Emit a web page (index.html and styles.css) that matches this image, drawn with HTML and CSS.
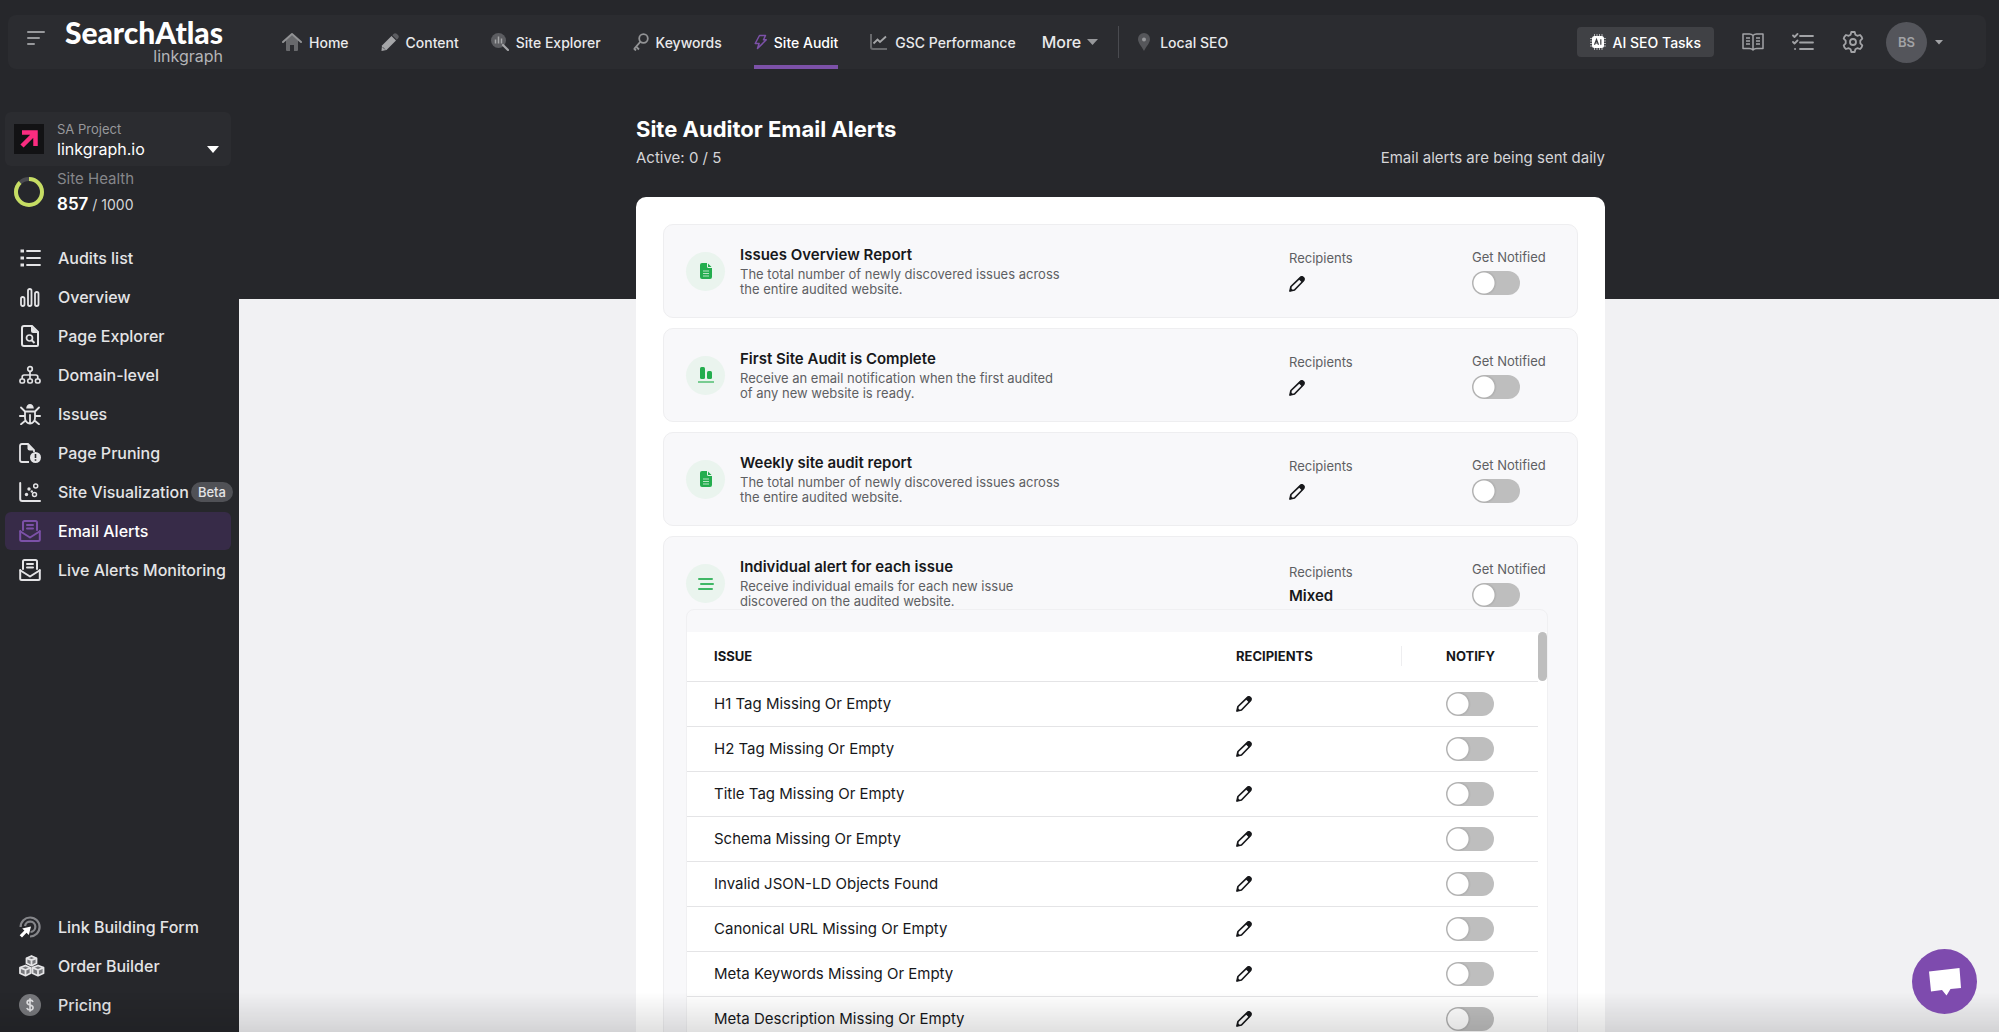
FILE: index.html
```
<!DOCTYPE html>
<html lang="en">
<head>
    <meta charset="UTF-8">
    <meta name="viewport" content="width=device-width, initial-scale=1.0">
    <title>Site Auditor Email Alerts</title>
    <link rel="stylesheet" href="styles.css">
</head>
<body>
    <!-- shared icons -->
    <svg class="sprite" aria-hidden="true">
        <symbol id="i-edit" viewBox="0 0 16 16">
            <path d="M1 15l1-4.500L11 1.800a2 2 0 0 1 3.200 3.200L5.500 14z" fill="none" stroke="currentColor" stroke-width="1.700" stroke-linejoin="round"/>
            <path d="M9.500 3l2-1.900a2.200 2.200 0 0 1 3.400 3.400l-1.900 2z" fill="currentColor"/>
            <path d="M.6 15.400l.9-3.600 2.700 2.700z" fill="currentColor"/>
        </symbol>
        <symbol id="i-doc" viewBox="0 0 16 16">
            <path d="M2 2a2 2 0 0 1 2-2h5v3.500A1.500 1.500 0 0 0 10.500 5H14v9a2 2 0 0 1-2 2H4a2 2 0 0 1-2-2z" fill="#24ad4e"/>
            <path d="M10 .5V4h3.500z" fill="#24ad4e"/>
            <path d="M5 8h6M5 10.500h6M5 13h6" stroke="#b5e4c2" stroke-width="1.100"/>
        </symbol>
        <symbol id="i-mail" viewBox="0 0 22 22">
            <g fill="none" stroke="currentColor" stroke-width="2" stroke-linejoin="round" stroke-linecap="round">
                <path d="M4 10V2.500Q4 1 5.500 1h11Q18 1 18 2.500V10"/>
                <path d="M8 5h6M8 8.500h6"/>
                <path d="M1.200 11V19.500Q1.200 21 2.700 21h16.600q1.500 0 1.500-1.500V11"/>
                <path d="M1.500 11.500L11 17.500l9.500-6"/>
            </g>
        </symbol>
    </svg>

    <header class="topbar">
        <button class="icon-btn menu-btn" aria-label="Toggle menu">
            <svg width="18" height="16" viewBox="0 0 18 16"><path d="M1 2h16M1 8h11M1 14h6" stroke="#97989b" stroke-width="2" stroke-linecap="round"/></svg>
        </button>
        <a class="logo" href="#">
            <span class="logo-name">SearchAtlas</span>
            <span class="logo-sub">linkgraph</span>
        </a>
        <nav class="main-nav">
            <a href="#">
                <svg width="20" height="20" viewBox="0 0 20 20"><path d="M4 8l6-5 6 5v10q0 1-1 1h-3v-6H8v6H5q-1 0-1-1z" fill="#68696c"/><path d="M1 10l9-8 9 8" fill="none" stroke="#929395" stroke-width="2" stroke-linecap="round" stroke-linejoin="round"/></svg>
                Home
            </a>
            <a href="#">
                <svg width="18" height="18" viewBox="0 0 18 18"><path d="M1 12.500L10.500 3l4.500 4.500L5.500 17 .5 18z" fill="#a5a6a8"/><path d="M11.300 2.200l1.200-1.200q1.500-1.500 3.200-.2l1.500 1.500q1.300 1.700-.2 3.200l-1.200 1.200z" fill="#5c5d61"/><path d="M1.500 14l2.500 2.500" stroke="#55565a"/></svg>
                Content
            </a>
            <a href="#">
                <svg width="18" height="18" viewBox="0 0 18 18"><circle cx="7.500" cy="7.500" r="7.500" fill="#5c5d61"/><path d="M4.500 6.500v4M7.500 3.500v7M10.500 5.500v5" stroke="#a5a6a8" stroke-width="1.500"/><path d="M12 12l5 5" stroke="#a5a6a8" stroke-width="2.200" stroke-linecap="round"/></svg>
                Site Explorer
            </a>
            <a href="#">
                <svg width="16" height="18" viewBox="0 0 16 18"><g fill="none" stroke="#929395" stroke-width="1.800"><circle cx="10.500" cy="5.500" r="4.300"/><path d="M7.500 8.700L1 16M3 13.500l3 3M1 15.500l2 2" /></g></svg>
                Keywords
            </a>
            <a class="active" href="#">
                <svg width="13" height="16" viewBox="0 0 13 16"><path d="M5.500 1.500h6L9.500 5.800h2.800L3.500 14.500l1.600-5H1.200z" fill="none" stroke="#7c51a8" stroke-width="1.500" stroke-linejoin="round"/></svg>
                Site Audit
            </a>
            <a href="#">
                <svg width="18" height="16" viewBox="0 0 18 16"><path d="M1 0v13q0 2 2 2h14" fill="none" stroke="#68696c" stroke-width="2"/><path d="M3.500 9.500l4-4 2.500 2.500 6-5.500" fill="none" stroke="#a5a6a8" stroke-width="1.800"/></svg>
                GSC Performance
            </a>
            <button class="more-btn">
                More
                <svg width="11" height="7" viewBox="0 0 11 7"><path d="M0 0h11L5.500 6z" fill="#97989b"/></svg>
            </button>
            <span class="nav-divider"></span>
            <a class="local" href="#">
                <svg width="14" height="18" viewBox="0 0 14 18"><path d="M7 0a6 6 0 0 1 6 6c0 4-3.500 7-6 12C4.500 13 1 10 1 6a6 6 0 0 1 6-6z" fill="#55565a"/><circle cx="7" cy="6.500" r="2" fill="#97989b"/></svg>
                Local SEO
            </a>
        </nav>
        <div class="tools">
            <button class="ai-btn">
                <svg width="16" height="16" viewBox="0 0 16 16"><path d="M4.500 0v16M7 0v16M9.500 0v16M12 0v16M0 4.500h16M0 7h16M0 9.500h16M0 12h16" stroke="#bcbdbf" stroke-width=".9"/><rect x="2" y="2" width="12" height="12" rx="2.500" fill="#fff"/><path d="M4.500 10.700L6.500 5.500l2 5.200M5.200 9h2.600M10.800 5.300v5.400" fill="none" stroke="#3d3e42" stroke-width="1.200"/></svg>
                AI SEO Tasks
            </button>
            <button class="icon-btn" aria-label="Guides">
                <svg width="22" height="18" viewBox="0 0 22 18"><g fill="none" stroke="#a2a3a6" stroke-width="1.500" stroke-linejoin="round"><path d="M11 2.500Q9.500 1 7.500 1H1v14.500h6.500q2 0 3.500 1.500 1.500-1.500 3.500-1.500H21V1h-6.500Q12.500 1 11 2.500V17"/><path d="M4 5h4M4 8h4M4 11h4M14 5h4M14 8h4M14 11h4"/></g></svg>
            </button>
            <button class="icon-btn" aria-label="Tasks">
                <svg width="22" height="18" viewBox="0 0 22 18"><g fill="none" stroke="#a2a3a6" stroke-width="1.800" stroke-linecap="round" stroke-linejoin="round"><path d="M8 3h13M8 9.500h13M8 16h13M1 2.500L2.500 4 5.500 1M1 9l1.500 1.500 3-3M3 16h.1"/></g></svg>
            </button>
            <button class="icon-btn" aria-label="Settings">
                <svg width="22" height="22" viewBox="0 0 22 22"><g fill="none" stroke="#a2a3a6" stroke-width="1.800" stroke-linejoin="round"><path d="M9.300 1h3.400l.7 2.700 1.900 1.100L18 4q2 1.600 2.300 3.700L18.300 9.700v2.600l2 2Q20 16.400 18 18l-2.700-.8-1.900 1.100-.7 2.700H9.300l-.7-2.700-1.900-1.100L4 18q-2-1.600-2.300-3.700l2-2V9.700l-2-2Q2 5.600 4 4l2.700.8 1.900-1.100z"/><circle cx="11" cy="11" r="3"/></g></svg>
            </button>
            <button class="user-btn">
                <span class="avatar">BS</span>
                <svg width="8" height="5" viewBox="0 0 8 5"><path d="M0 0h8L4 4.500z" fill="#a2a3a6"/></svg>
            </button>
        </div>
    </header>

    <div class="layout">
        <aside class="sidebar">
            <div>
                <button class="project">
                    <svg width="30" height="30" viewBox="0 0 30 30"><path d="M0 0h30v30H0z" fill="#121214"/><path d="M8 22L22 8M8 8.500h13.500V22" fill="none" stroke="#fb2c80" stroke-width="4.500"/></svg>
                    <span class="project-text">
                        <small>SA Project</small>
                        <span>linkgraph.io</span>
                    </span>
                    <svg width="12" height="8" viewBox="0 0 12 8"><path d="M0 0h12L6 7z" fill="#fff"/></svg>
                </button>
                <div class="health">
                    <svg width="32" height="32" viewBox="0 0 32 32"><circle cx="16" cy="16" r="13" fill="none" stroke="#4a4b50" stroke-width="4"/><circle cx="16" cy="16" r="13" fill="none" stroke="#c6dd63" stroke-width="4" pathLength="1000" stroke-dasharray="880 1000" transform="rotate(-90 16 16)"/></svg>
                    <div>
                        <p class="health-label">Site Health</p>
                        <p class="health-score"><strong>857</strong> / 1000</p>
                    </div>
                </div>
                <nav class="side-nav">
                    <a href="#">
                        <svg width="22" height="22" viewBox="0 0 22 22"><path d="M1.500 2.500H5V5.500H1.500zM1.500 9.500H5v3H1.500zM1.500 16.500H5v3H1.500z" fill="currentColor"/><path d="M8 4h13M8 11h13M8 18h13" stroke="currentColor" stroke-width="1.800" stroke-linecap="round"/></svg>
                        Audits list
                    </a>
                    <a href="#">
                        <svg width="22" height="22" viewBox="0 0 22 22"><g fill="none" stroke="currentColor" stroke-width="1.800"><rect x="2" y="11" width="3.500" height="9" rx="1.700"/><rect x="9" y="3" width="3.500" height="17" rx="1.700"/><rect x="16" y="6" width="3.500" height="14" rx="1.700"/></g></svg>
                        Overview
                    </a>
                    <a href="#">
                        <svg width="22" height="22" viewBox="0 0 22 22"><path d="M5 1h8l6 6v13q0 1-1 1H5q-2 0-2-2V3q0-2 2-2z" fill="none" stroke="currentColor" stroke-width="2"/><path d="M12 1l7 7h-5q-2 0-2-2z" fill="currentColor"/><circle cx="10.500" cy="13" r="3" fill="none" stroke="currentColor" stroke-width="1.700"/><path d="M12.500 15l3 3" stroke="currentColor" stroke-width="1.900"/></svg>
                        Page Explorer
                    </a>
                    <a href="#">
                        <svg width="22" height="22" viewBox="0 0 22 22"><g fill="none" stroke="currentColor" stroke-width="1.700"><circle cx="11" cy="5" r="2.300"/><rect x="1" y="15" width="4.500" height="4" rx="1.500"/><rect x="8.800" y="15" width="4.500" height="4" rx="1.500"/><rect x="16.500" y="15" width="4.500" height="4" rx="1.500"/><path d="M11 7.500V15M3.200 15v-2q0-2 2-2h11.600q2 0 2 2v2"/></g></svg>
                        Domain-level
                    </a>
                    <a href="#">
                        <svg width="22" height="22" viewBox="0 0 22 22"><path d="M7.200 5.500a3.800 4.500 0 0 1 7.600 0z" fill="currentColor"/><g fill="none" stroke="currentColor" stroke-width="1.800" stroke-linecap="round"><path d="M6 8.500h10v6.500a5 5.500 0 0 1-10 0zM11 12v8M6 8.500L2 4.500M16 8.500l4-4M6 13H.9M16 13h5.100M6.500 17.500L2 21.200M15.500 17.500l4.500 3.700"/></g></svg>
                        Issues
                    </a>
                    <a href="#">
                        <svg width="22" height="22" viewBox="0 0 22 22"><path d="M10 20H3q-2 0-2-2V4q0-2 2-2h6l6 6v2" fill="none" stroke="currentColor" stroke-width="1.800"/><path d="M8.500 2L15 8.500h-4.500q-2 0-2-2z" fill="currentColor"/><circle cx="16.500" cy="15.500" r="5.500" fill="currentColor"/><path d="M16.500 12v4M16.500 17.300v1.500" stroke="#26272b" stroke-width="1.600"/></svg>
                        Page Pruning
                    </a>
                    <a href="#">
                        <svg width="22" height="22" viewBox="0 0 22 22"><path d="M1.200 2v16q0 2 2 2H21" fill="none" stroke="currentColor" stroke-width="2" stroke-linecap="round"/><g fill="currentColor"><circle cx="7.500" cy="13.500" r="1.700"/><circle cx="10" cy="8" r="1.700"/><circle cx="12.800" cy="10.500" r="1.200"/></g><g fill="none" stroke="currentColor" stroke-width="1.500"><circle cx="16.700" cy="5" r="2"/><circle cx="15.500" cy="13.500" r="2"/></g></svg>
                        Site Visualization
                        <span class="badge">Beta</span>
                    </a>
                    <a class="active" href="#">
                        <svg width="22" height="22"><use href="#i-mail"/></svg>
                        Email Alerts
                    </a>
                    <a href="#">
                        <svg width="22" height="22"><use href="#i-mail"/></svg>
                        Live Alerts Monitoring
                    </a>
                </nav>
            </div>
            <nav class="side-nav">
                <a href="#">
                    <svg width="22" height="22" viewBox="0 0 22 22"><g fill="none" stroke="#85868a" stroke-width="2.200"><path d="M1.600 11A9.500 9.500 0 1 1 11 20.500"/><path d="M6 10a5.200 5.200 0 1 1 5.500 6"/></g><path d="M12 10.500L9.800 19l-2.300-2.300L3 21.500.7 19.200l4.700-4.600-2.200-2.200z" fill="#fff"/></svg>
                    Link Building Form
                </a>
                <a href="#">
                    <svg class="wide" width="26" height="22" viewBox="0 0 26 22"><g fill="#77787c" stroke="#e4e4e6" stroke-width="1.800" stroke-linejoin="round"><path d="M12.500 1l5 2.200v5l-5 2.500-5-2.500v-5zM6.500 10.500l5 2.200v5.500l-5 2.500-5.500-2.500v-5.500zM19 10.500l5.500 2.200v5.500L19 20.700l-5.500-2.500v-5.500z"/><path d="M7.500 3.200l5 2 5-2M12.500 5.200v5.500M1 12.700l5.500 2.300 5-2.300M6.500 15v5.700M13.500 12.700L19 15l5.500-2.300M19 15v5.700" fill="none"/></g></svg>
                    Order Builder
                </a>
                <a href="#">
                    <svg width="22" height="22" viewBox="0 0 22 22"><circle cx="11" cy="11" r="11" fill="#77787c"/><path d="M14 8q-.7-1.900-3-1.900-2.900 0-2.900 2.300Q8.100 10.300 11 11q3.100.7 3.100 2.700 0 2.300-3.100 2.300-2.500 0-3.200-2M11 4.200v13.600" fill="none" stroke="#e4e4e6" stroke-width="1.600"/></svg>
                    Pricing
                </a>
            </nav>
        </aside>

        <main class="content">
            <h1>Site Auditor Email Alerts</h1>
            <div class="subtitle">
                <span>Active: 0 / 5</span>
                <span>Email alerts are being sent daily</span>
            </div>

            <div class="card">
                <section class="alert">
                    <div class="alert-head">
                        <span class="alert-icon"><svg width="16" height="16"><use href="#i-doc"/></svg></span>
                        <div class="alert-text">
                            <h2>Issues Overview Report</h2>
                            <p>The total number of newly discovered issues across<br>the entire audited website.</p>
                        </div>
                        <div class="recipients">
                            <span>Recipients</span>
                            <button class="icon-btn" aria-label="Edit recipients"><svg width="16" height="16"><use href="#i-edit"/></svg></button>
                        </div>
                        <label class="notified">Get Notified <input class="switch" type="checkbox"></label>
                    </div>
                </section>

                <section class="alert">
                    <div class="alert-head">
                        <span class="alert-icon"><svg width="16" height="16" viewBox="0 0 16 16"><rect x="2" width="5" height="12" rx="1.500" fill="#24ad4e"/><rect x="9" y="4" width="5" height="8" rx="1.500" fill="#24ad4e"/><path d="M0 15h16" stroke="#5cc27a" stroke-width="1.600"/></svg></span>
                        <div class="alert-text">
                            <h2>First Site Audit is Complete</h2>
                            <p>Receive an email notification when the first audited<br>of any new website is ready.</p>
                        </div>
                        <div class="recipients">
                            <span>Recipients</span>
                            <button class="icon-btn" aria-label="Edit recipients"><svg width="16" height="16"><use href="#i-edit"/></svg></button>
                        </div>
                        <label class="notified">Get Notified <input class="switch" type="checkbox"></label>
                    </div>
                </section>

                <section class="alert">
                    <div class="alert-head">
                        <span class="alert-icon"><svg width="16" height="16"><use href="#i-doc"/></svg></span>
                        <div class="alert-text">
                            <h2>Weekly site audit report</h2>
                            <p>The total number of newly discovered issues across<br>the entire audited website.</p>
                        </div>
                        <div class="recipients">
                            <span>Recipients</span>
                            <button class="icon-btn" aria-label="Edit recipients"><svg width="16" height="16"><use href="#i-edit"/></svg></button>
                        </div>
                        <label class="notified">Get Notified <input class="switch" type="checkbox"></label>
                    </div>
                </section>

                <section class="alert">
                    <div class="alert-head with-table">
                        <span class="alert-icon"><svg width="16" height="16" viewBox="0 0 16 16"><path d="M1 3h13M3 8h12M1 13h13" stroke="#3fb765" stroke-width="2" stroke-linecap="round"/></svg></span>
                        <div class="alert-text">
                            <h2>Individual alert for each issue</h2>
                            <p>Receive individual emails for each new issue<br>discovered on the audited website.</p>
                        </div>
                        <div class="recipients">
                            <span>Recipients</span>
                            <strong>Mixed</strong>
                        </div>
                        <label class="notified">Get Notified <input class="switch" type="checkbox"></label>
                    </div>
                    <div class="issues">
                        <table>
                            <thead>
                                <tr><th>Issue</th><th class="col-recipients"><span>Recipients</span></th><th class="col-notify">Notify</th></tr>
                            </thead>
                            <tbody>
                                <tr>
                                    <td>H1 Tag Missing Or Empty</td>
                                    <td><button class="icon-btn" aria-label="Edit recipients"><svg width="16" height="16"><use href="#i-edit"/></svg></button></td>
                                    <td><input class="switch" type="checkbox" aria-label="Notify"></td>
                                </tr>
                                <tr>
                                    <td>H2 Tag Missing Or Empty</td>
                                    <td><button class="icon-btn" aria-label="Edit recipients"><svg width="16" height="16"><use href="#i-edit"/></svg></button></td>
                                    <td><input class="switch" type="checkbox" aria-label="Notify"></td>
                                </tr>
                                <tr>
                                    <td>Title Tag Missing Or Empty</td>
                                    <td><button class="icon-btn" aria-label="Edit recipients"><svg width="16" height="16"><use href="#i-edit"/></svg></button></td>
                                    <td><input class="switch" type="checkbox" aria-label="Notify"></td>
                                </tr>
                                <tr>
                                    <td>Schema Missing Or Empty</td>
                                    <td><button class="icon-btn" aria-label="Edit recipients"><svg width="16" height="16"><use href="#i-edit"/></svg></button></td>
                                    <td><input class="switch" type="checkbox" aria-label="Notify"></td>
                                </tr>
                                <tr>
                                    <td>Invalid JSON-LD Objects Found</td>
                                    <td><button class="icon-btn" aria-label="Edit recipients"><svg width="16" height="16"><use href="#i-edit"/></svg></button></td>
                                    <td><input class="switch" type="checkbox" aria-label="Notify"></td>
                                </tr>
                                <tr>
                                    <td>Canonical URL Missing Or Empty</td>
                                    <td><button class="icon-btn" aria-label="Edit recipients"><svg width="16" height="16"><use href="#i-edit"/></svg></button></td>
                                    <td><input class="switch" type="checkbox" aria-label="Notify"></td>
                                </tr>
                                <tr>
                                    <td>Meta Keywords Missing Or Empty</td>
                                    <td><button class="icon-btn" aria-label="Edit recipients"><svg width="16" height="16"><use href="#i-edit"/></svg></button></td>
                                    <td><input class="switch" type="checkbox" aria-label="Notify"></td>
                                </tr>
                                <tr>
                                    <td>Meta Description Missing Or Empty</td>
                                    <td><button class="icon-btn" aria-label="Edit recipients"><svg width="16" height="16"><use href="#i-edit"/></svg></button></td>
                                    <td><input class="switch" type="checkbox" aria-label="Notify"></td>
                                </tr>
                            </tbody>
                        </table>
                        <div class="scroll-track"><div class="scroll-thumb"></div></div>
                    </div>
                </section>
            </div>
        </main>
    </div>

    <div class="bottom-fade"></div>
    <button class="chat" aria-label="Open chat">
        <svg width="34" height="30" viewBox="0 0 34 30"><path d="M1 4.500L31.500 1 33 21l-10.500 1L18.500 28.500 14 23 3 24.500z" fill="#fff"/></svg>
    </button>
</body>
</html>
```

FILE: styles.css
```
* {
    box-sizing: border-box;
}
body {
    margin: 0;
    height: 100vh;
    overflow: hidden;
    display: flex;
    flex-direction: column;
    font-family: Inter, "Liberation Sans", sans-serif;
    background: linear-gradient(#26272b 299px, #f1f1f3 299px);
    color: #17181b;
}
h1, h2, p {
    margin: 0;
}
a {
    color: inherit;
    text-decoration: none;
}
button {
    font-family: inherit;
    color: inherit;
    background: none;
    border: none;
    padding: 0;
    cursor: pointer;
}
svg {
    flex: none;
    display: block;
}
.sprite {
    width: 0;
    height: 0;
    position: absolute;
}

/* top bar */
.topbar {
    flex: none;
    display: flex;
    align-items: center;
    height: 54px;
    margin: 15px 13px 0 8px;
    padding: 0 43px 0 19px;
    background: #2b2c30;
    border-radius: 8px;
}
.menu-btn {
    padding-bottom: 8px;
}
.logo {
    width: 160px;
    margin-left: 18px;
    display: flex;
    flex-direction: column;
    align-items: flex-end;
}
.logo-name {
    font-family: Lato, sans-serif;
    font-weight: 900;
    font-size: 30px;
    line-height: 28px;
    color: #fff;
}
.logo-sub {
    font-size: 16px;
    line-height: 20px;
    color: #b4b5b8;
}
.main-nav {
    display: flex;
    align-items: center;
    align-self: stretch;
    gap: 32px;
    margin-left: 59px;
    font-size: 14px;
    font-weight: 500;
    color: #e9e9eb;
}
.main-nav a {
    display: flex;
    align-items: center;
    align-self: stretch;
    gap: 7px;
    white-space: nowrap;
}
.main-nav .active {
    color: #fff;
    background: linear-gradient(#7c51a8, #7c51a8) bottom / 100% 4px no-repeat;
}
.more-btn {
    display: flex;
    align-items: center;
    gap: 6px;
    margin-left: -6px;
    font-size: 16px;
    font-weight: 500;
}
.nav-divider {
    width: 1px;
    height: 32px;
    margin-left: -12px;
    background: #4a4b50;
}
.main-nav .local {
    margin-left: -14px;
    gap: 9px;
}
.tools {
    display: flex;
    align-items: center;
    gap: 28px;
    margin-left: auto;
}
.ai-btn {
    display: flex;
    align-items: center;
    gap: 7px;
    height: 30px;
    padding: 0 13px;
    border-radius: 4px;
    background: #404145;
    color: #fff;
    font-size: 14px;
    font-weight: 500;
}
.user-btn {
    display: flex;
    align-items: center;
    gap: 8px;
    margin-left: -6px;
}
.avatar {
    width: 41px;
    height: 41px;
    border-radius: 50%;
    background: #54555b;
    color: #a2a3a6;
    font-size: 13px;
    font-weight: 600;
    line-height: 41px;
}

.layout {
    flex: 1;
    min-height: 0;
    display: grid;
    grid-template-columns: 239px 1fr;
    grid-template-rows: minmax(0, 1fr);
    column-gap: 3px;
}

/* sidebar */
.sidebar {
    display: flex;
    flex-direction: column;
    justify-content: space-between;
    padding: 43px 8px 8px 5px;
    background: #26272b;
}
.project {
    display: flex;
    align-items: center;
    width: 100%;
    height: 54px;
    padding: 0 12px 0 9px;
    border-radius: 6px;
    background: #2b2c30;
    text-align: left;
}
.project-text {
    flex: 1;
    display: flex;
    flex-direction: column;
    padding-left: 13px;
    color: #fff;
    font-size: 16px;
    line-height: 20px;
}
.project-text small {
    font-size: 13px;
    color: #97989b;
}
.project > svg:last-child {
    align-self: flex-end;
    margin-bottom: 12px;
}
.health {
    display: flex;
    align-items: center;
    gap: 12px;
    padding: 0 8px;
    margin-bottom: 22px;
}
.health-label {
    font-size: 15px;
    line-height: 26px;
    color: #85868a;
}
.health-score {
    font-size: 14px;
    line-height: 25px;
    color: #d5d5d8;
}
.health-score strong {
    font-size: 17px;
    font-weight: 600;
    color: #fff;
}
.side-nav {
    display: flex;
    flex-direction: column;
    gap: 1px;
}
.side-nav a {
    display: flex;
    align-items: center;
    height: 38px;
    padding-left: 14px;
    border-radius: 6px;
    color: #e4e4e6;
    font-size: 16px;
    font-weight: 500;
    white-space: nowrap;
}
.side-nav svg {
    margin-right: 17px;
}
.side-nav .wide {
    margin-right: 13px;
}
.side-nav .active {
    background: #372b48;
    color: #fff;
}
.side-nav .active svg {
    color: #7c51a8;
}
.badge {
    margin-left: 2px;
    padding: 0 7px;
    border-radius: 10px;
    background: #505156;
    font-size: 13px;
    line-height: 20px;
}

/* content */
.content {
    width: 100%;
    max-width: 969px;
    margin: 0 auto;
    padding-top: 43px;
}
h1 {
    font-size: 22px;
    line-height: 34px;
    font-weight: 700;
    color: #fff;
}
.subtitle {
    display: flex;
    justify-content: space-between;
    margin-bottom: 27px;
    font-size: 15px;
    line-height: 24px;
    color: #d5d5d8;
}
.card {
    display: flex;
    flex-direction: column;
    gap: 10px;
    padding: 27px;
    border-radius: 10px;
    background: #fff;
}
.alert {
    border: 1px solid #eeeef0;
    border-radius: 10px;
    background: #f8f8fa;
}
.alert-head {
    display: grid;
    grid-template-columns: 54px 1fr 183px 75px;
    align-items: center;
    height: 92px;
    padding: 0 30px 0 22px;
}
.alert-head.with-table {
    height: 72px;
    padding-top: 18px;
}
.alert-icon {
    display: grid;
    place-items: center;
    width: 39px;
    height: 39px;
    border-radius: 50%;
    background: #eaf4ee;
}
.alert-text {
    padding-bottom: 3px;
}
.alert-text h2 {
    font-size: 15px;
    font-weight: 600;
    line-height: 24px;
}
.alert-text p {
    font-size: 13px;
    line-height: 15px;
    color: #5e5f63;
}
.recipients, .notified {
    font-size: 13px;
    line-height: 18px;
    color: #5e5f63;
    white-space: nowrap;
}
.recipients .icon-btn {
    margin: 9px 0 2px;
}
.recipients strong {
    display: block;
    margin-top: 6px;
    font-size: 15px;
    font-weight: 600;
    color: #17181b;
}
.icon-btn {
    display: block;
}
.recipients .icon-btn, td .icon-btn {
    color: #17181b;
}
.switch {
    appearance: none;
    display: block;
    width: 48px;
    height: 24px;
    margin: 0;
    border-radius: 12px;
    background: radial-gradient(circle at 12px 12px, #fff 10px, #b0b0b0 11px, #bebebe 13px);
    cursor: pointer;
}
.switch:checked {
    background: radial-gradient(circle at 36px 12px, #fff 10px, #7c51a8 11px);
}
.notified .switch {
    margin-top: 5px;
}

/* issue table */
.issues {
    display: flex;
    margin: 0 29px 0 22px;
    padding-top: 22px;
    border: 1px solid #f0f0f2;
    border-radius: 8px;
}
table {
    flex: 1;
    border-collapse: collapse;
    background: #fff;
}
th, td {
    padding: 0 0 0 27px;
    text-align: left;
    border-bottom: 1px solid #e4e4e6;
}
th {
    height: 49px;
    font-size: 13px;
    font-weight: 700;
    text-transform: uppercase;
}
td {
    height: 45px;
    font-size: 15px;
}
th + th, td + td {
    padding-left: 0;
}
.col-recipients {
    width: 210px;
}
.col-recipients span {
    display: block;
    width: 166px;
    line-height: 20px;
    border-right: 1px solid #eeeef0;
}
.col-notify {
    width: 92px;
}
.scroll-track {
    width: 9px;
    background: #fff;
}
.scroll-thumb {
    height: 49px;
    border-radius: 5px;
    background: #bebebe;
}

.bottom-fade {
    position: fixed;
    left: 0;
    right: 0;
    bottom: 0;
    height: 40px;
    background: linear-gradient(transparent, rgba(0, 0, 0, 0.12));
    pointer-events: none;
}
.chat {
    position: fixed;
    right: 22px;
    bottom: 18px;
    display: grid;
    place-items: center;
    width: 65px;
    height: 65px;
    border-radius: 50%;
    background: #7e4bae;
}
```
